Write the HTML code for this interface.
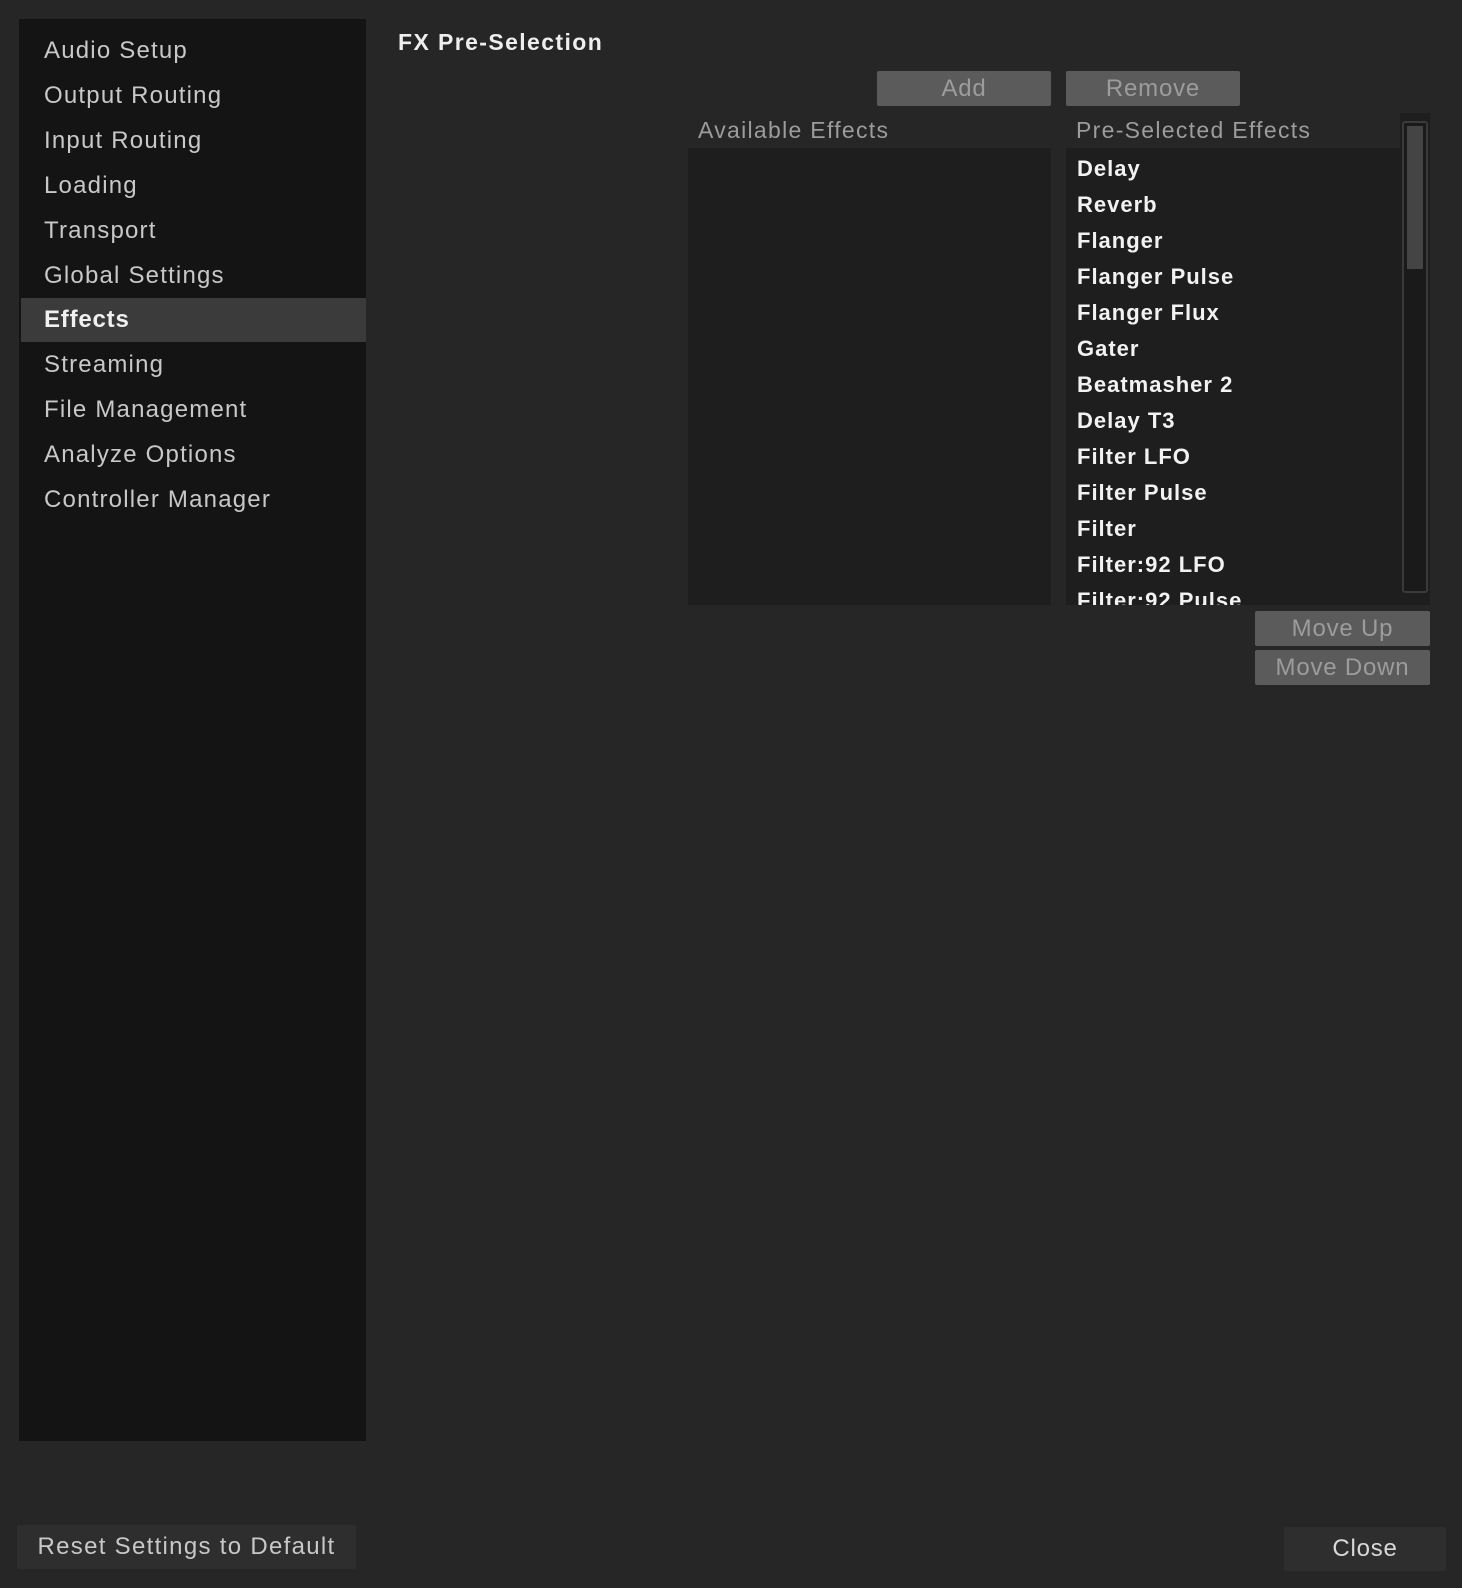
<!DOCTYPE html>
<html><head><style>
*{margin:0;padding:0;box-sizing:border-box}
body{width:1462px;height:1588px;background:#262626;font-family:"Liberation Sans",sans-serif;position:relative;overflow:hidden}
.a{position:absolute}
#side{left:19px;top:19px;width:347px;height:1422px;background:#141414}
.it{position:absolute;left:25px;font-size:24px;color:#c8c8c8;letter-spacing:1.2px;line-height:44px;height:44px}
.sel{left:2px;width:345px;background:#3b3b3b;padding-left:23px;color:#f0f0f0;font-weight:bold;letter-spacing:.8px}
.btn{position:absolute;background:#5b5b5b;color:#9c9c9c;font-size:24px;text-align:center;border-radius:2px;letter-spacing:.8px}
.list{position:absolute;background:#1e1e1e}
.hd{position:absolute;left:0;top:0;height:35px;background:#262626;color:#9c9c9c;font-size:23px;line-height:35px;padding-left:10px;letter-spacing:1.3px}
.e{position:absolute;left:11px;color:#f2f2f2;font-size:22px;font-weight:bold;letter-spacing:1px;line-height:36px}
</style></head><body>
<div id="side" class="a">
<div class="it" style="top:10px">Audio Setup</div>
<div class="it" style="top:55px">Output Routing</div>
<div class="it" style="top:100px">Input Routing</div>
<div class="it" style="top:145px">Loading</div>
<div class="it" style="top:190px">Transport</div>
<div class="it" style="top:235px">Global Settings</div>
<div class="it sel" style="top:279px">Effects</div>
<div class="it" style="top:324px">Streaming</div>
<div class="it" style="top:369px">File Management</div>
<div class="it" style="top:414px">Analyze Options</div>
<div class="it" style="top:459px">Controller Manager</div>
</div>
<div class="a" style="left:398px;top:29px;font-size:23px;font-weight:bold;color:#eee;letter-spacing:1.4px">FX Pre-Selection</div>
<div class="btn" style="left:877px;top:71px;width:174px;height:35px;line-height:35px">Add</div>
<div class="btn" style="left:1066px;top:71px;width:174px;height:35px;line-height:35px">Remove</div>
<div class="list" style="left:688px;top:113px;width:363px;height:492px"><div class="hd" style="width:363px">Available Effects</div></div>
<div class="list" style="left:1066px;top:113px;width:364px;height:492px;overflow:hidden">
<div class="hd" style="width:334px">Pre-Selected Effects</div>
<div class="e" style="top:38px">Delay</div>
<div class="e" style="top:74px">Reverb</div>
<div class="e" style="top:110px">Flanger</div>
<div class="e" style="top:146px">Flanger Pulse</div>
<div class="e" style="top:182px">Flanger Flux</div>
<div class="e" style="top:218px">Gater</div>
<div class="e" style="top:254px">Beatmasher 2</div>
<div class="e" style="top:290px">Delay T3</div>
<div class="e" style="top:326px">Filter LFO</div>
<div class="e" style="top:362px">Filter Pulse</div>
<div class="e" style="top:398px">Filter</div>
<div class="e" style="top:434px">Filter:92 LFO</div>
<div class="e" style="top:470px">Filter:92 Pulse</div>
<div class="a" style="left:336px;top:8px;width:26px;height:472px;border:2px solid #3a3a3a;border-radius:3px;background:#1a1a1a"><div style="margin:3px;height:143px;background:#444"></div></div>
</div>
<div class="btn" style="left:1255px;top:611px;width:175px;height:35px;line-height:35px">Move Up</div>
<div class="btn" style="left:1255px;top:650px;width:175px;height:35px;line-height:35px">Move Down</div>
<div class="btn" style="left:17px;top:1525px;width:339px;height:44px;line-height:44px;background:#2e2e2e;color:#c8c8c8;font-size:24px;letter-spacing:1.3px">Reset Settings to Default</div>
<div class="btn" style="left:1284px;top:1527px;width:162px;height:44px;line-height:44px;background:#2e2e2e;color:#d8d8d8;font-size:24px">Close</div>
</body></html>
